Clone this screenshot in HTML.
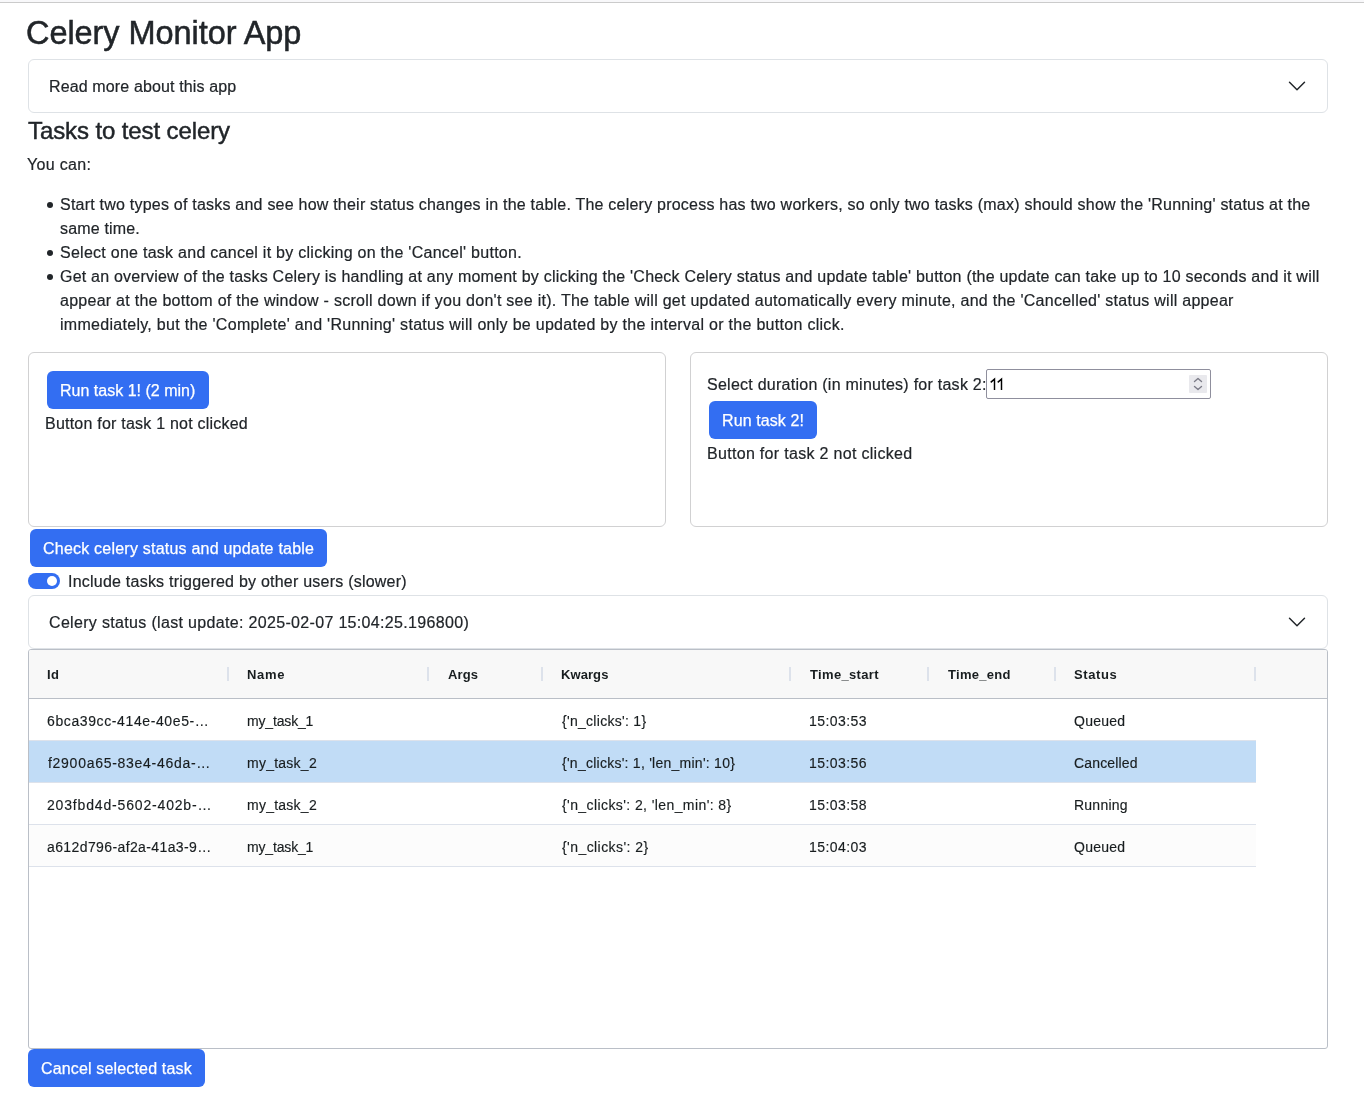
<!DOCTYPE html>
<html><head><meta charset="utf-8"><title>Celery Monitor App</title>
<style>
html,body{margin:0;padding:0;background:#fff;width:1364px;height:1106px;overflow:hidden;position:relative}
body{font-family:"Liberation Sans",sans-serif;color:#212529}
.t{position:absolute;white-space:pre;will-change:transform}
.acc{position:absolute;left:28px;width:1298px;height:52px;border:1px solid #dee2e6;border-radius:6px}
.chev{position:absolute}
.bul{position:absolute;left:46.5px;width:6px;height:6px;border-radius:50%;background:#212529}
.card{position:absolute;top:352px;width:636px;height:173px;border:1px solid #d1d1d2;border-radius:6px}
.btn{position:absolute;height:38px;background:#336ef2;border-radius:6px}
.inp{position:absolute;left:986px;top:369px;width:223px;height:28px;border:1px solid #8f8f9d;border-radius:2px;background:#fff}
.spin{position:absolute;left:1189px;top:375px;width:18px;height:18px;background:#e9e9ed;border-radius:1px}
.spin svg{display:block}
.sw{position:absolute;left:28px;top:573px;width:32px;height:16px;border-radius:8px;background:#336ef2}
.knob{position:absolute;left:19px;top:3px;width:10px;height:10px;border-radius:50%;background:#fff}
.grid{position:absolute;left:28px;top:649px;width:1298px;height:398px;border:1px solid #babfc7;border-radius:3px;overflow:hidden;background:#fff}
.ghead{position:absolute;left:0;top:0;width:1298px;height:48px;background:#f8f8f8;border-bottom:1px solid #babfc7}
.sep{position:absolute;top:17px;width:2px;height:14px;background:#dde2eb}
.row{position:absolute;left:0;width:1227px;height:41px;border-bottom:1px solid #dde2eb}
</style></head><body>

<div style="position:absolute;left:0;top:0;width:1364px;height:2px;background:#f8f8fa"></div>
<div style="position:absolute;left:0;top:2px;width:1364px;height:1px;background:#cbcbcb"></div>
<div class="acc" style="top:59px"></div>
<svg class="chev" style="left:1287px;top:76px" width="20" height="20" viewBox="0 0 16 16"><path d="M2 5L8 11L14 5" fill="none" stroke="#212529" stroke-width="1.15" stroke-linecap="round" stroke-linejoin="round"/></svg>
<div class="bul" style="top:202.4px"></div>
<div class="bul" style="top:250.4px"></div>
<div class="bul" style="top:274.4px"></div>
<div class="card" style="left:28px"></div>
<div class="card" style="left:690px"></div>
<div class="btn" style="left:47px;top:371px;width:162px"></div>
<div class="btn" style="left:709px;top:401px;width:108px"></div>
<div class="btn" style="left:30px;top:529px;width:297px"></div>
<div class="btn" style="left:28px;top:1049px;width:177px"></div>
<div class="inp"></div>
<svg style="position:absolute;left:985px;top:375px" width="24" height="18" viewBox="0 0 24 18"><path d="M5.7 7.4 L9.5 4.1 L9.5 15 M12.7 7.4 L16.5 4.1 L16.5 15" fill="none" stroke="#000" stroke-width="1.45" stroke-linejoin="miter"/></svg>
<div class="spin"><svg width="18" height="18" viewBox="0 0 18 18"><path d="M5.5 6.5 L9 3.5 L12.5 6.5 M5.5 11.5 L9 14.5 L12.5 11.5" fill="none" stroke="#7c7c88" stroke-width="1.4" stroke-linecap="round" stroke-linejoin="round"/></svg></div>
<div class="sw"><div class="knob"></div></div>
<div class="acc" style="top:595px"></div>
<svg class="chev" style="left:1287px;top:612px" width="20" height="20" viewBox="0 0 16 16"><path d="M2 5L8 11L14 5" fill="none" stroke="#212529" stroke-width="1.15" stroke-linecap="round" stroke-linejoin="round"/></svg>
<div class="grid">
  <div class="ghead"></div>
  <div class="sep" style="left:198px"></div>
  <div class="sep" style="left:398px"></div>
  <div class="sep" style="left:512px"></div>
  <div class="sep" style="left:760px"></div>
  <div class="sep" style="left:898px"></div>
  <div class="sep" style="left:1025px"></div>
  <div class="sep" style="left:1225px"></div>
  <div class="row" style="top:49px;background:#ffffff"></div>
  <div class="row" style="top:91px;background:#c1dcf6"></div>
  <div class="row" style="top:133px;background:#ffffff"></div>
  <div class="row" style="top:175px;background:#fcfcfc"></div>
</div>

<div class="t" style="left:26.0px;top:13px;font-size:32.5px;line-height:40px;color:#212529;-webkit-text-stroke:0.5px #212529;letter-spacing:-0.059px">Celery Monitor App</div><div class="t" style="left:49.0px;top:75px;font-size:16px;line-height:24px;color:#212529;-webkit-text-stroke:0.2px #212529;letter-spacing:0.130px">Read more about this app</div><div class="t" style="left:28.0px;top:116px;font-size:24px;line-height:30px;color:#212529;-webkit-text-stroke:0.45px #212529;letter-spacing:-0.105px">Tasks to test celery</div><div class="t" style="left:27.0px;top:153px;font-size:16px;line-height:24px;color:#212529;-webkit-text-stroke:0.2px #212529;letter-spacing:0.329px">You can:</div><div class="t" style="left:60.0px;top:193px;font-size:16px;line-height:24px;color:#212529;-webkit-text-stroke:0.2px #212529;letter-spacing:0.221px">Start two types of tasks and see how their status changes in the table. The celery process has two workers, so only two tasks (max) should show the &#x27;Running&#x27; status at the</div><div class="t" style="left:60.0px;top:217px;font-size:16px;line-height:24px;color:#212529;-webkit-text-stroke:0.2px #212529;letter-spacing:0.167px">same time.</div><div class="t" style="left:60.0px;top:241px;font-size:16px;line-height:24px;color:#212529;-webkit-text-stroke:0.2px #212529;letter-spacing:0.266px">Select one task and cancel it by clicking on the &#x27;Cancel&#x27; button.</div><div class="t" style="left:60.0px;top:265px;font-size:16px;line-height:24px;color:#212529;-webkit-text-stroke:0.2px #212529;letter-spacing:0.217px">Get an overview of the tasks Celery is handling at any moment by clicking the &#x27;Check Celery status and update table&#x27; button (the update can take up to 10 seconds and it will</div><div class="t" style="left:60.0px;top:289px;font-size:16px;line-height:24px;color:#212529;-webkit-text-stroke:0.2px #212529;letter-spacing:0.264px">appear at the bottom of the window - scroll down if you don&#x27;t see it). The table will get updated automatically every minute, and the &#x27;Cancelled&#x27; status will appear</div><div class="t" style="left:60.0px;top:313px;font-size:16px;line-height:24px;color:#212529;-webkit-text-stroke:0.2px #212529;letter-spacing:0.290px">immediately, but the &#x27;Complete&#x27; and &#x27;Running&#x27; status will only be updated by the interval or the button click.</div><div class="t" style="left:60.0px;top:379px;font-size:16px;line-height:24px;color:#ffffff;-webkit-text-stroke:0.25px #ffffff;letter-spacing:0.011px">Run task 1! (2 min)</div><div class="t" style="left:45.0px;top:412px;font-size:16px;line-height:24px;color:#212529;-webkit-text-stroke:0.2px #212529;letter-spacing:0.221px">Button for task 1 not clicked</div><div class="t" style="left:707.0px;top:373px;font-size:16px;line-height:24px;color:#212529;-webkit-text-stroke:0.2px #212529;letter-spacing:0.256px">Select duration (in minutes) for task 2:</div><div class="t" style="left:722.0px;top:409px;font-size:16px;line-height:24px;color:#ffffff;-webkit-text-stroke:0.25px #ffffff;letter-spacing:0.100px">Run task 2!</div><div class="t" style="left:707.0px;top:442px;font-size:16px;line-height:24px;color:#212529;-webkit-text-stroke:0.2px #212529;letter-spacing:0.307px">Button for task 2 not clicked</div><div class="t" style="left:43.0px;top:537px;font-size:16px;line-height:24px;color:#ffffff;-webkit-text-stroke:0.25px #ffffff;letter-spacing:0.220px">Check celery status and update table</div><div class="t" style="left:68.0px;top:570px;font-size:16px;line-height:24px;color:#212529;-webkit-text-stroke:0.2px #212529;letter-spacing:0.228px">Include tasks triggered by other users (slower)</div><div class="t" style="left:49.0px;top:611px;font-size:16px;line-height:24px;color:#212529;-webkit-text-stroke:0.2px #212529;letter-spacing:0.328px">Celery status (last update: 2025-02-07 15:04:25.196800)</div><div class="t" style="left:41.0px;top:1057px;font-size:16px;line-height:24px;color:#ffffff;-webkit-text-stroke:0.25px #ffffff;letter-spacing:0.158px">Cancel selected task</div><div class="t" style="left:47.0px;top:665px;font-size:13px;line-height:20px;color:#181d1f;font-weight:700;letter-spacing:0.500px">Id</div><div class="t" style="left:247.0px;top:665px;font-size:13px;line-height:20px;color:#181d1f;font-weight:700;letter-spacing:0.667px">Name</div><div class="t" style="left:448.0px;top:665px;font-size:13px;line-height:20px;color:#181d1f;font-weight:700;letter-spacing:0.100px">Args</div><div class="t" style="left:561.0px;top:665px;font-size:13px;line-height:20px;color:#181d1f;font-weight:700;letter-spacing:0.080px">Kwargs</div><div class="t" style="left:810.0px;top:665px;font-size:13px;line-height:20px;color:#181d1f;font-weight:700;letter-spacing:0.333px">Time_start</div><div class="t" style="left:948.0px;top:665px;font-size:13px;line-height:20px;color:#181d1f;font-weight:700;letter-spacing:0.286px">Time_end</div><div class="t" style="left:1074.0px;top:665px;font-size:13px;line-height:20px;color:#181d1f;font-weight:700;letter-spacing:0.600px">Status</div><div class="t" style="left:47.0px;top:711px;font-size:14px;line-height:20px;color:#181d1f;-webkit-text-stroke:0.15px #181d1f;letter-spacing:0.611px">6bca39cc-414e-40e5-…</div><div class="t" style="left:247.0px;top:711px;font-size:14px;line-height:20px;color:#181d1f;-webkit-text-stroke:0.15px #181d1f;letter-spacing:-0.163px">my_task_1</div><div class="t" style="left:561.5px;top:711px;font-size:14px;line-height:20px;color:#181d1f;-webkit-text-stroke:0.15px #181d1f;letter-spacing:0.286px">{&#x27;n_clicks&#x27;: 1}</div><div class="t" style="left:809.0px;top:711px;font-size:14px;line-height:20px;color:#181d1f;-webkit-text-stroke:0.15px #181d1f;letter-spacing:0.429px">15:03:53</div><div class="t" style="left:1074.0px;top:711px;font-size:14px;line-height:20px;color:#181d1f;-webkit-text-stroke:0.15px #181d1f;letter-spacing:0.240px">Queued</div><div class="t" style="left:48.0px;top:753px;font-size:14px;line-height:20px;color:#181d1f;-webkit-text-stroke:0.15px #181d1f;letter-spacing:0.721px">f2900a65-83e4-46da-…</div><div class="t" style="left:247.0px;top:753px;font-size:14px;line-height:20px;color:#181d1f;-webkit-text-stroke:0.15px #181d1f;letter-spacing:0.250px">my_task_2</div><div class="t" style="left:561.5px;top:753px;font-size:14px;line-height:20px;color:#181d1f;-webkit-text-stroke:0.15px #181d1f;letter-spacing:0.252px">{&#x27;n_clicks&#x27;: 1, &#x27;len_min&#x27;: 10}</div><div class="t" style="left:809.0px;top:753px;font-size:14px;line-height:20px;color:#181d1f;-webkit-text-stroke:0.15px #181d1f;letter-spacing:0.429px">15:03:56</div><div class="t" style="left:1074.0px;top:753px;font-size:14px;line-height:20px;color:#181d1f;-webkit-text-stroke:0.15px #181d1f;letter-spacing:0.162px">Cancelled</div><div class="t" style="left:47.0px;top:795px;font-size:14px;line-height:20px;color:#181d1f;-webkit-text-stroke:0.15px #181d1f;letter-spacing:0.832px">203fbd4d-5602-402b-…</div><div class="t" style="left:247.0px;top:795px;font-size:14px;line-height:20px;color:#181d1f;-webkit-text-stroke:0.15px #181d1f;letter-spacing:0.250px">my_task_2</div><div class="t" style="left:561.5px;top:795px;font-size:14px;line-height:20px;color:#181d1f;-webkit-text-stroke:0.15px #181d1f;letter-spacing:0.407px">{&#x27;n_clicks&#x27;: 2, &#x27;len_min&#x27;: 8}</div><div class="t" style="left:809.0px;top:795px;font-size:14px;line-height:20px;color:#181d1f;-webkit-text-stroke:0.15px #181d1f;letter-spacing:0.429px">15:03:58</div><div class="t" style="left:1074.0px;top:795px;font-size:14px;line-height:20px;color:#181d1f;-webkit-text-stroke:0.15px #181d1f;letter-spacing:0.233px">Running</div><div class="t" style="left:47.0px;top:837px;font-size:14px;line-height:20px;color:#181d1f;-webkit-text-stroke:0.15px #181d1f;letter-spacing:0.390px">a612d796-af2a-41a3-9…</div><div class="t" style="left:247.0px;top:837px;font-size:14px;line-height:20px;color:#181d1f;-webkit-text-stroke:0.15px #181d1f;letter-spacing:-0.163px">my_task_1</div><div class="t" style="left:561.5px;top:837px;font-size:14px;line-height:20px;color:#181d1f;-webkit-text-stroke:0.15px #181d1f;letter-spacing:0.429px">{&#x27;n_clicks&#x27;: 2}</div><div class="t" style="left:809.0px;top:837px;font-size:14px;line-height:20px;color:#181d1f;-webkit-text-stroke:0.15px #181d1f;letter-spacing:0.429px">15:04:03</div><div class="t" style="left:1074.0px;top:837px;font-size:14px;line-height:20px;color:#181d1f;-webkit-text-stroke:0.15px #181d1f;letter-spacing:0.240px">Queued</div>
</body></html>
